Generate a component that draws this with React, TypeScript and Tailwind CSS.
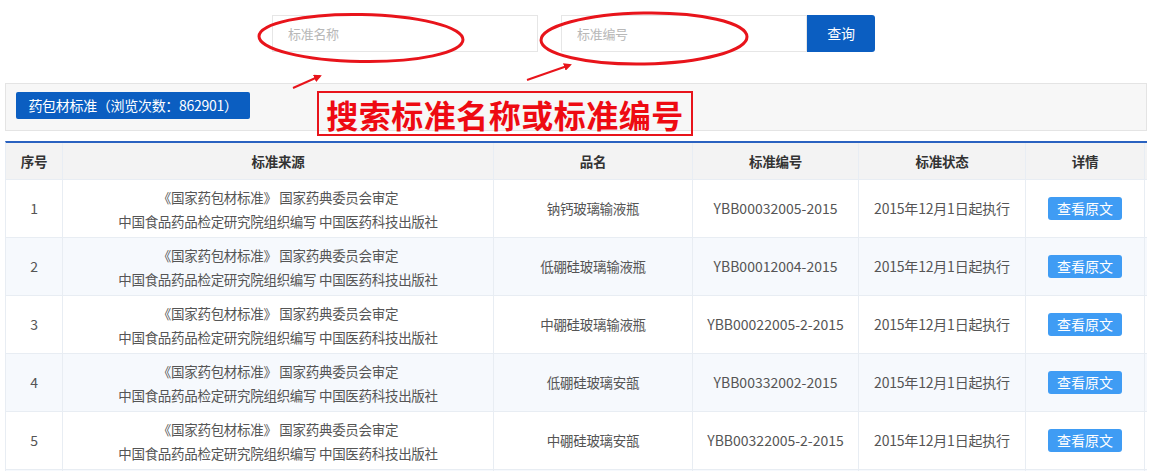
import React from 'react'

// ─── Data ─────────────────────────────────────────────────────────────────────

const rows = [
  { id: 1, name: '钠钙玻璃输液瓶', code: 'YBB00032005-2015' },
  { id: 2, name: '低硼硅玻璃输液瓶', code: 'YBB00012004-2015' },
  { id: 3, name: '中硼硅玻璃输液瓶', code: 'YBB00022005-2-2015' },
  { id: 4, name: '低硼硅玻璃安瓿', code: 'YBB00332002-2015' },
  { id: 5, name: '中硼硅玻璃安瓿', code: 'YBB00322005-2-2015' },
]

const cols = 'grid grid-cols-[57px_431px_199px_166px_167px_119px]'
const cell = 'flex items-center justify-center text-center border-r border-[#e8edf3]'

// ─── Component ────────────────────────────────────────────────────────────────

export default function App() {
  return (
    <div
      className="relative w-[1152px] h-[471px] overflow-hidden bg-white text-[13.5px] tracking-[-0.3px] text-[#555]"
      style={{ fontFamily: '"Noto Sans CJK SC", "Noto Sans", sans-serif' }}
    >
      {/* search bar */}
      <div className="flex pt-[15px] pl-[272px]">
        <input
          placeholder="标准名称"
          className="w-[266px] h-[37px] border border-[#e6e6e6] px-[15px] text-[13px] outline-none placeholder:text-[#b8b8b8]"
        />
        <input
          placeholder="标准编号"
          className="ml-[23px] w-[246px] h-[37px] border border-[#e6e6e6] px-[15px] text-[13px] outline-none placeholder:text-[#b8b8b8]"
        />
        <button className="w-[68px] h-[37px] bg-[#0b5ec1] text-white text-[14px] rounded-r-[3px]">查询</button>
      </div>

      {/* category panel */}
      <div className="mx-[5px] mt-[31px] h-[48px] border border-[#e4e4e4] bg-[#f7f7f7] pl-[10px] pt-[8px]">
        <button className="w-[234px] h-[27px] bg-[#0b5ec1] text-white text-[14px] tracking-[-0.3px] rounded-[2px]">
          药包材标准（浏览次数：862901）
        </button>
      </div>

      {/* table */}
      <div className="mx-[5px] mt-[10px] border-t-2 border-[#2a62c0] border-l border-l-[#e8edf3]">
        <div className={`${cols} h-[37px] bg-[#f3f3f3] font-bold text-[#333] border-b border-[#e8edf3]`}>
          <div className={cell}>序号</div>
          <div className={cell}>标准来源</div>
          <div className={cell}>品名</div>
          <div className={cell}>标准编号</div>
          <div className={cell}>标准状态</div>
          <div className={cell}>详情</div>
        </div>
        {rows.map((r) => (
          <div
            key={r.id}
            className={`${cols} h-[58px] border-b border-[#e8edf3] ${r.id % 2 === 0 ? 'bg-[#f6f9fd]' : 'bg-white'}`}
          >
            <div className={`${cell} text-[14px]`}>{r.id}</div>
            <div className={`${cell} flex-col leading-[24px]`}>
              <span>《国家药包材标准》&nbsp;国家药典委员会审定</span>
              <span>中国食品药品检定研究院组织编写 中国医药科技出版社</span>
            </div>
            <div className={cell}>{r.name}</div>
            <div className={`${cell} text-[14px] tracking-normal`}>{r.code}</div>
            <div className={`${cell} text-[14px] tracking-[-0.2px]`}>2015年12月1日起执行</div>
            <div className={cell}>
              <button className="w-[74px] h-[23px] bg-[#3f9cf4] text-white text-[14px] tracking-normal rounded-[3px] leading-[23px]">
                查看原文
              </button>
            </div>
          </div>
        ))}
        <div className={`${cols} h-[58px] bg-[#f6f9fd]`}>
          <div className={cell} />
          <div className={cell} />
          <div className={cell} />
          <div className={cell} />
          <div className={cell} />
          <div className={cell} />
        </div>
      </div>

      {/* annotation box */}
      <div className="absolute left-[317px] top-[91px] w-[376px] h-[45px] border-2 border-[#e8141b] flex items-center justify-center">
        <span className="text-[32px] font-bold text-[#ee0a12] leading-none tracking-[0.5px]">搜索标准名称或标准编号</span>
      </div>

      {/* annotation ellipses and arrows */}
      <svg className="absolute left-0 top-0 pointer-events-none" width="1152" height="140">
        <defs>
          <marker id="ah" markerWidth="8" markerHeight="8" refX="6" refY="4" orient="auto" markerUnits="userSpaceOnUse">
            <path d="M0,0 L8,4 L0,8 z" fill="#e8141b" />
          </marker>
        </defs>
        <ellipse cx="361" cy="38" rx="102" ry="23.5" fill="none" stroke="#e8141b" strokeWidth="3" transform="rotate(1 361 38)" />
        <ellipse cx="644" cy="38.5" rx="103" ry="25.5" fill="none" stroke="#e8141b" strokeWidth="3" transform="rotate(-1 644 38)" />
        <line x1="293" y1="88" x2="320" y2="76" stroke="#e8141b" strokeWidth="2" markerEnd="url(#ah)" />
        <line x1="527" y1="80" x2="570" y2="65" stroke="#e8141b" strokeWidth="2" markerEnd="url(#ah)" />
      </svg>
    </div>
  )
}
